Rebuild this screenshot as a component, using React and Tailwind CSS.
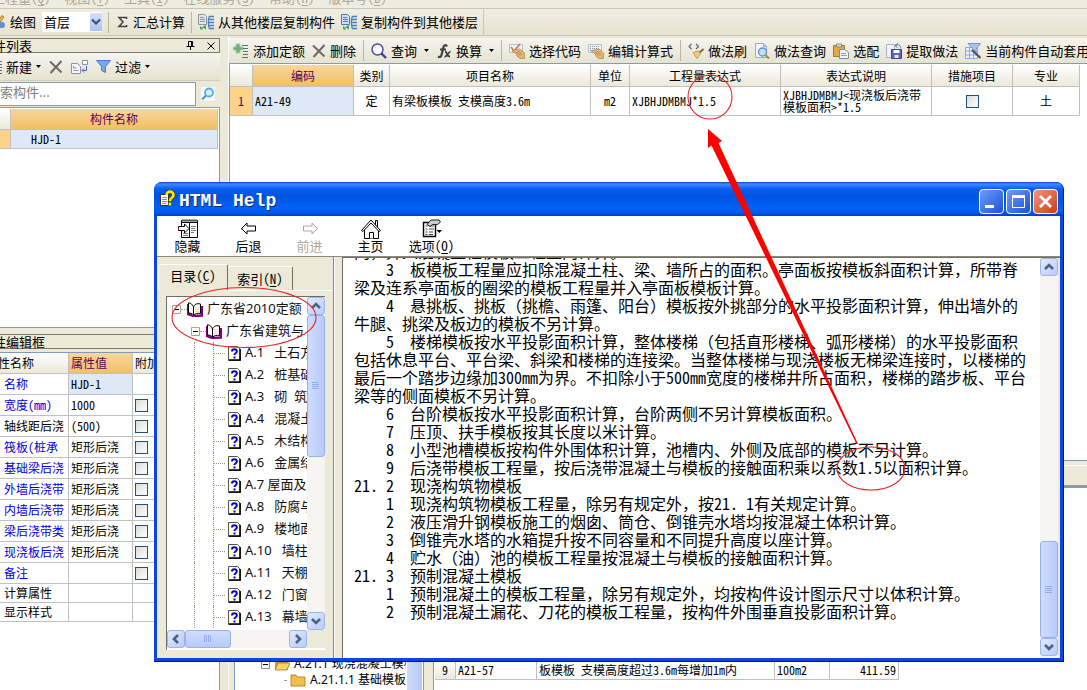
import React from "react";

const HALF = "[font-feature-settings:'hwid']";

// Latin runs are set in half-width glyphs, as in a fixed-pitch Chinese font.
function T({ children }) {
  return String(children)
    .split(/([ -~]+)/)
    .map((s, i) => (i % 2 ? <span key={i} className={HALF}>{s}</span> : s));
}

function Key({ label, k }) {
  return (
    <span className="whitespace-nowrap">
      {label}
      <span className={HALF}>(<u className="underline-offset-2">{k}</u>)</span>
    </span>
  );
}

const Svg = ({ w = 16, h = 16, children }) => (
  <svg width={w} height={h} viewBox={`0 0 ${w} ${h}`} className="shrink-0" aria-hidden="true">{children}</svg>
);

const CrossIcon = () => (
  <Svg w={14} h={14}><path d="M1 1.5 L12.5 12.5 M12.5 1 L1.5 13" stroke="#6b6b6b" strokeWidth="2" fill="none" /></Svg>
);
const Down = () => <Svg w={5} h={3}><path d="M0 0h5L2.5 3z" fill="#000" /></Svg>;
const Lines = ({ x = 9 }) => (
  <path d={`M${x} 2.5h6M${x + 1} 5.5h5M${x + 1} 8.5h5M${x + 1} 11.5h5M${x} 14.5h6`} stroke="#5b6b80" fill="none" />
);
const AddIcon = () => (
  <Svg>
    <path d="M3 1h4v3h3v3H7v3H3V7H0V4h3z" fill="#6fae78" stroke="#a9cfae" />
    <Lines x={9} />
  </Svg>
);
const CopyIcon = ({ tint, edge }) => (
  <Svg>
    <path d="M.500 .500h6l2 2v8h-8z" fill={tint} stroke={edge} />
    <path d="M2 3.500h4M2 5.500h5M2 7.500h5" stroke={edge} />
    <path d="M2 11.500c.500 1.500 1.500 2 2.500 2V16l-2.500-1zM4 13l4-2v4.500z" fill="#37a85a" />
    <path d="M11.500 2c-1.500 3-1.500 9 0 13M11.500 2.500h4.500M11 5.500h5M10.500 8.500H16M11 11.500h5M11.500 14.500h4.500" stroke="#4a80bb" fill="none" strokeWidth="1.300" />
  </Svg>
);
const PageMag = () => (
  <Svg>
    <path d="M1.500 .500h8l3 3v11h-11z" fill="#f2f6fb" stroke="#9badc4" />
    <path d="M9.500 .500v3h3" fill="none" stroke="#9badc4" />
    <circle cx="8.500" cy="9" r="4" fill="#bfe0f8" stroke="#5f8fc0" strokeWidth="1.300" />
    <path d="M11.500 12l3.500 3.500" stroke="#c8862c" strokeWidth="2.200" />
  </Svg>
);
const MagIcon = () => (
  <Svg>
    <circle cx="6.500" cy="6.500" r="5.500" fill="#f7faff" stroke="#4747a3" strokeWidth="1.400" />
    <path d="M10.500 10.500l4.500 4.500" stroke="#3a3a9c" strokeWidth="2.400" />
  </Svg>
);
const FxIcon = () => (
  <Svg>
    <path d="M11 3.500c-1-2-3-1.500-3.500.5L5.500 12c-.5 2-2 2.500-3.500 1.500M4 6.500h6" stroke="#3f3f3f" strokeWidth="2.200" fill="none" />
    <path d="M9 8.500c2.500 0 1.500 5.500 5 5M14.500 9c-2-1-3.500 5.500-6 4.500" stroke="#3f3f3f" strokeWidth="1.800" fill="none" />
  </Svg>
);
const HandIcon = ({ check }) => (
  <Svg>
    <path d="M.500 1.500h13v8H.500z" fill="#eef3fa" stroke="#b3bfce" />
    {check ? (
      <path d="M2 4l3 4L11 1" stroke="#e0705c" strokeWidth="1.600" fill="none" />
    ) : (
      <path d="M2 3.500h10M2 5.500h10M2 7.500h5" stroke="#8093ad" strokeDasharray="1 1" />
    )}
    <path d="M3 8l4-1.500 4-.5 4.500 4v5.500H11l-3-2.500-1-2.500z" fill="#e0b774" stroke="#b38a4c" strokeWidth=".8" />
    <path d="M7 9l4.500 3.500M9 8l4 3.500" stroke="#a97c3a" strokeWidth=".8" />
  </Svg>
);
const BrushIcon = () => (
  <Svg>
    <path d="M3.500 1L1 3.500 3.500 6M8 1l2.500 2.500L8 6" stroke="#55606e" strokeWidth="1.100" fill="none" />
    <path d="M15.500 6L11 10" stroke="#8c6a44" strokeWidth="2" />
    <path d="M5 9.500L10.500 8l2 2.500L9 15.500z" fill="#edcf82" stroke="#b98b3c" strokeWidth=".8" />
  </Svg>
);
const PasteIcon = () => (
  <Svg>
    <path d="M.500 2.500h11v11H.500z" fill="#e2a94a" stroke="#a7762b" />
    <path d="M3.500 1h5v3h-5z" fill="#d6d6d6" stroke="#7d7d7d" strokeWidth=".8" />
    <path d="M6.500 6.500h5l4 3v6h-9z" fill="#f1f5fa" stroke="#7c8ba0" />
    <path d="M8 10.500h5M8 12.500h6" stroke="#8fa0b6" />
  </Svg>
);
const SaveIcon = () => (
  <Svg>
    <path d="M.500 1.500h8v13h-8z" fill="#eef3fa" stroke="#a4b3c8" />
    <path d="M9 2.500c4-1.500 6 0 5.500 3M12 .500l-3 2 2.500 2" stroke="#58759c" fill="none" />
    <path d="M5.500 6.500h10v9h-10z" fill="#5c64bc" stroke="#39419c" />
    <path d="M7.500 7h6v3h-6z" fill="#fff" /><path d="M8.500 12h4v3h-4z" fill="#dfe5f5" />
  </Svg>
);
const GridIcon = () => (
  <Svg>
    <path d="M.500 4.500h12v11H.500zM.500 8h12M.500 12h12M4.500 4v11M8.500 4v11" fill="#eaf1fb" stroke="#8aa9dc" />
    <path d="M3 .500h12.500L11 6v4L8 9V6z" fill="#a9c4ef" stroke="#5f84c5" strokeWidth=".8" />
    <path d="M7 7l8.500 8" stroke="#545454" strokeWidth="2.200" />
  </Svg>
);
const PenIcon = () => (
  <Svg>
    <path d="M0 5h10v9H0z" fill="#8eb6e8" stroke="#4a78b8" />
    <path d="M14 3l-6 8-2 1 .500-2.500L12 1.500z" fill="#f2b945" stroke="#9b6c20" strokeWidth=".8" />
    <circle cx="12" cy="11" r="3" fill="#5f8fd6" />
  </Svg>
);
const FunnelIcon = () => (
  <Svg w={15} h={15}><path d="M.500 1.500h14L9.500 7.500v6l-4-2V7.500z" fill="#7aa6ec" stroke="#4a7bd0" /></Svg>
);
const CardsIcon = () => (
  <Svg w={17} h={14}>
    <path d="M.500 3.500h6l3 3v7h-9z" fill="#f4f7fb" stroke="#8894a8" />
    <path d="M2.500 6v2h3M2.500 10.500h5" stroke="#8894a8" fill="none" />
    <path d="M11.500 .500h5v4h-5z" fill="#fff" stroke="#8894a8" />
    <path d="M15.500 6v4.500h-4M13 8.500l-2 2 2 2" stroke="#3c62d0" fill="none" />
  </Svg>
);

const Sep = () => <span className="h-[21px] w-px shrink-0 bg-[#b9b6a2]" />;

function Tool({ icon, label, arrow }) {
  return (
    <button className="flex shrink-0 items-center gap-1 whitespace-nowrap">
      {icon}
      <span>{label}</span>
      {arrow && <span className="pl-[3px]"><Down /></span>}
    </button>
  );
}

const check =
  "block size-[13px] appearance-none border border-[#1d5281] bg-linear-to-br from-[#dcdcd7] to-white";

const cell = "border-r border-b border-[#c0c0c0] overflow-hidden whitespace-nowrap font-normal";
const headBg = "bg-linear-to-b from-white to-[#ebe9da]";
const goldBg = "bg-linear-to-b from-[#f9d69c] to-[#f1c062] text-[#5a005a]";

const PROPS = [
  ["名称", "HJD-1", false, true],
  ["宽度(mm)", "1000", true, true],
  ["轴线距后浇", " (500)", true, false],
  ["筏板(桩承", "矩形后浇", true, true],
  ["基础梁后浇", "矩形后浇", true, true],
  ["外墙后浇带", "矩形后浇", true, true],
  ["内墙后浇带", "矩形后浇", true, true],
  ["梁后浇带类", "矩形后浇", true, true],
  ["现浇板后浇", "矩形后浇", true, true],
  ["备注", "", true, true],
  ["计算属性", "", false, false],
  ["显示样式", "", false, false],
];

function LeftPane() {
  return (
    <aside className="flex w-[220px] shrink-0 flex-col">
      <div className="mt-0.5 flex h-[15px] items-center border border-l-0 border-[#7b7a73] pr-1 text-[13px] leading-[13px]">
        <h2 className="-ml-[7px] flex-1">件列表</h2>
        <button aria-label="固定" className="mr-3"><Svg w={9} h={9}><path d="M2.500 5V.500h4V5M.500 5.500h8M4.500 6v3M5.500 1v4" stroke="#000" fill="none" /></Svg></button>
        <button aria-label="关闭"><Svg w={8} h={8}><path d="M.500 .500l7 7M7.500 .500l-7 7" stroke="#000" fill="none" /></Svg></button>
      </div>
      <div className="flex h-[27px] items-center gap-2 bg-linear-to-b from-[#f5f4ee] to-[#e6e3d0] text-[13px]">
        <button className="-ml-[14px] flex items-center gap-1">
          <Svg><Lines x={10} /></Svg><span>新建</span><Down />
        </button>
        <button aria-label="删除"><CrossIcon /></button>
        <button aria-label="复制"><CardsIcon /></button>
        <button className="flex items-center gap-1"><FunnelIcon /><span>过滤</span><Down /></button>
      </div>
      <div className="flex h-[26px] items-center border-t border-[#cfccba] text-[13px]">
        <input
          aria-label="搜索构件"
          placeholder="搜索构件..."
          className="-ml-[18px] h-[24px] min-w-0 flex-1 border border-[#7f9db9] bg-white pb-1 pl-1 outline-none placeholder:text-[#7d7d7d]"
        />
        <button aria-label="搜索" className="flex w-[24px] justify-center">
          <Svg w={14} h={14}>
            <path d="M0 0h14v14H0z" fill="#f7fafc" />
            <circle cx="8" cy="5.500" r="4" fill="#d8eefc" stroke="#56aee6" strokeWidth="1.800" />
            <path d="M5 8.500L1 12.500" stroke="#4a9ad6" strokeWidth="2.200" />
          </Svg>
        </button>
      </div>
      <div className="mt-px h-[220px] border-t border-r border-[#7f9db9] bg-white pt-px pr-px">
        <table className="w-full table-fixed border-separate border-spacing-0 text-[12px]">
          <colgroup><col className="w-[11px]" /><col /></colgroup>
          <thead>
            <tr className="h-[21px]"><th className={`${cell} ${headBg}`} /><th className={`${cell} ${goldBg}`}>构件名称</th></tr>
          </thead>
          <tbody>
            <tr className="h-[19px]">
              <td className={`${cell} bg-[#ffd28a]`} />
              <td className={`${cell} bg-[#dfe8f6] pl-5`}><T>HJD-1</T></td>
            </tr>
          </tbody>
        </table>
      </div>
      <div className="flex min-h-0 flex-1 flex-col border-t border-[#7f9db9] pt-[6px]">
        <h2 className="mb-[3px] flex h-[15px] items-center border-y border-[#7b7a73] text-[13px] leading-[13px]">
          <span className="-ml-[7px]">性编辑框</span>
        </h2>
        <div className="flex-1 border-t border-r border-[#7f9db9] bg-white">
          <table className="w-full table-fixed border-separate border-spacing-0 text-[12px] leading-[16px]">
            <colgroup><col className="w-[69px]" /><col className="w-[64px]" /><col /></colgroup>
            <thead>
              <tr className="h-[21px] text-left">
                <th className={`${cell} ${headBg}`}><span className="-ml-[2px]">性名称</span></th>
                <th className={`${cell} ${goldBg} pl-0.5`}>属性值</th>
                <th className={`${cell} ${headBg} pl-0.5`}>附加</th>
              </tr>
            </thead>
            <tbody>
              {PROPS.map(([name, value, box, blue], i) => (
                <tr key={name} className={i < 10 ? "h-[21px]" : "h-[19px]"}>
                  <td className={`${cell} pl-1 ${blue ? "text-[#0000e0]" : ""}`}><T>{name}</T></td>
                  <td className={`${cell} pl-0.5 ${i === 0 ? "bg-[#dfe8f6]" : ""}`}><T>{value}</T></td>
                  <td className={`${cell} pl-0.5`}>{box && <input type="checkbox" aria-label={name} className={check} />}</td>
                </tr>
              ))}
            </tbody>
          </table>
        </div>
      </div>
    </aside>
  );
}

function RightPane() {
  return (
    <main className="flex min-w-0 flex-1 flex-col border-l border-white">
      <div className="mt-0.5 flex h-[26px] shrink-0 items-center gap-[7px] overflow-hidden border-b border-[#7f9db9] bg-linear-to-b from-[#f5f4ee] to-[#e6e3d0] pl-1 text-[13px]">
        <Tool icon={<AddIcon />} label="添加定额" />
        <Tool icon={<CrossIcon />} label="删除" />
        <Sep />
        <Tool icon={<MagIcon />} label="查询" arrow />
        <Tool icon={<FxIcon />} label="换算" arrow />
        <Sep />
        <Tool icon={<HandIcon check />} label="选择代码" />
        <Tool icon={<HandIcon />} label="编辑计算式" />
        <Sep />
        <Tool icon={<BrushIcon />} label="做法刷" />
        <Tool icon={<PageMag />} label="做法查询" />
        <Tool icon={<PasteIcon />} label="选配" />
        <Tool icon={<SaveIcon />} label="提取做法" />
        <Tool icon={<GridIcon />} label="当前构件自动套用" />
      </div>
      <div className="h-[396px] shrink-0 border-l border-[#7f9db9] bg-white pt-px">
        <table className="w-[850px] table-fixed border-separate border-spacing-0 text-[12px]">
          <colgroup>
            <col className="w-[23px]" /><col className="w-[101px]" /><col className="w-[36px]" /><col className="w-[201px]" />
            <col className="w-[39px]" /><col className="w-[151px]" /><col className="w-[151px]" /><col className="w-[81px]" /><col />
          </colgroup>
          <thead>
            <tr className="h-[22px]">
              <th className={`${cell} ${headBg}`} />
              <th className={`${cell} ${goldBg}`}>编码</th>
              {["类别", "项目名称", "单位", "工程量表达式", "表达式说明", "措施项目", "专业"].map((h) => (
                <th key={h} className={`${cell} ${headBg}`}>{h}</th>
              ))}
            </tr>
          </thead>
          <tbody>
            <tr className="h-[29px]">
              <td className={`${cell} bg-[#ffd28a] text-center text-[#5a005a]`}><T>1</T></td>
              <td className={`${cell} bg-[#dfe8f6] pl-0.5`}><T>A21-49</T></td>
              <td className={`${cell} text-center`}>定</td>
              <td className={`${cell} pl-0.5`}><T>有梁板模板 支模高度3.6m</T></td>
              <td className={`${cell} text-center`}><T>m2</T></td>
              <td className={`${cell} pl-0.5`}><T>XJBHJDMBMJ*1.5</T></td>
              <td className={`${cell} pl-0.5 leading-[12px]`}><T>{"XJBHJDMBMJ<现浇板后浇带"}</T><br /><T>{"模板面积>*1.5"}</T></td>
              <td className={cell}><input type="checkbox" aria-label="措施项目" className={`${check} mx-auto`} /></td>
              <td className={`${cell} text-center`}>土</td>
            </tr>
          </tbody>
        </table>
      </div>
      <div className="h-[27px] shrink-0 border-t border-b border-[#7f9db9] pt-1"><div className="h-full border-t border-b border-t-white border-b-[#9d9a8a]" /></div>
      <div className="flex min-h-0 flex-1">
        <div className="ml-[5px] flex w-[190px] shrink-0 border border-b-0 border-[#7f9db9] bg-white text-[12px]">
          <ul className="flex min-w-0 flex-1 flex-col justify-end overflow-hidden whitespace-nowrap pb-0.5 font-['Noto_Sans','Noto_Sans_CJK_SC',sans-serif] leading-[16px]">
            <li className="flex items-center gap-1 pl-[26px]">
              <Svg w={9} h={9}><path d="M.500 .500h8v8h-8z" fill="#fff" stroke="#7b93b5" /><path d="M2 4.500h5" stroke="#000" /></Svg>
              <Svg w={16} h={14}><path d="M1 3h5l1 2h7v8H1z" fill="#d99a2b" /><path d="M4 6h12l-3 7H1z" fill="#fbd367" stroke="#a8741c" strokeWidth=".8" /></Svg>
              <span>A.21.1 现浇混凝土模板</span>
            </li>
            <li className="flex items-center gap-1 pl-[49px]">
              <span className="w-2 border-t border-dotted border-[#a09c8a]" />
              <Svg w={16} h={14}><path d="M1 2h5l1 2h8v9H1z" fill="#f3bf4b" stroke="#a8741c" strokeWidth=".8" /></Svg>
              <span>A.21.1.1 基础模板</span>
            </li>
          </ul>
          <div className="w-[17px] border-x border-white bg-linear-to-r from-[#cfdcfd] to-[#b3c8f8]" />
        </div>
        <div className="ml-[9px] flex flex-1 flex-col justify-end border-t border-l border-[#7f9db9] bg-white pb-[10px] pl-px">
          <table className="w-[464px] table-fixed border-separate border-spacing-0 text-[12px]">
            <colgroup><col className="w-[21px]" /><col className="w-[81px]" /><col className="w-[238px]" /><col className="w-[55px]" /><col /></colgroup>
            <tbody>
              <tr className="h-[19px]">
                <td className={`${cell} ${headBg} text-center`}><T>9</T></td>
                <td className={`${cell} pl-0.5`}><T>A21-57</T></td>
                <td className={`${cell} pl-0.5`}><T>板模板 支模高度超过3.6m每增加1m内</T></td>
                <td className={`${cell} pl-0.5`}><T>100m2</T></td>
                <td className={`${cell} pr-0.5 text-right`}><T>411.59</T></td>
              </tr>
            </tbody>
          </table>
        </div>
      </div>
    </main>
  );
}

const NAV = ["A.1   土石方", "A.2   桩基础", "A.3   砌  筑", "A.4   混凝土", "A.5   木结构", "A.6   金属结", "A.7 屋面及", "A.8   防腐与", "A.9   楼地面", "A.10   墙柱面", "A.11   天棚工", "A.12   门窗工", "A.13   幕墙工"];

const BODY = [
  ["", "", "内，并入混凝土柱模板工程量内计算。"],
  ["", "3", "板模板工程量应扣除混凝土柱、梁、墙所占的面积。亭面板按模板斜面积计算，所带脊"],
  [null, null, "梁及连系亭面板的圈梁的模板工程量并入亭面板模板计算。"],
  ["", "4", "悬挑板、挑板（挑檐、雨篷、阳台）模板按外挑部分的水平投影面积计算，伸出墙外的"],
  [null, null, "牛腿、挑梁及板边的模板不另计算。"],
  ["", "5", "楼梯模板按水平投影面积计算，整体楼梯（包括直形楼梯、弧形楼梯）的水平投影面积"],
  [null, null, "包括休息平台、平台梁、斜梁和楼梯的连接梁。当整体楼梯与现浇楼板无梯梁连接时，以楼梯的"],
  [null, null, "最后一个踏步边缘加300mm为界。不扣除小于500mm宽度的楼梯井所占面积，楼梯的踏步板、平台"],
  [null, null, "梁等的侧面模板不另计算。"],
  ["", "6", "台阶模板按水平投影面积计算，台阶两侧不另计算模板面积。"],
  ["", "7", "压顶、扶手模板按其长度以米计算。"],
  ["", "8", "小型池槽模板按构件外围体积计算，池槽内、外侧及底部的模板不另计算。"],
  ["", "9", "后浇带模板工程量，按后浇带混凝土与模板的接触面积乘以系数1.5以面积计算。"],
  ["21.", "2", "现浇构筑物模板"],
  ["", "1", "现浇构筑物模板工程量，除另有规定外，按21. 1有关规定计算。"],
  ["", "2", "液压滑升钢模板施工的烟囱、筒仓、倒锥壳水塔均按混凝土体积计算。"],
  ["", "3", "倒锥壳水塔的水箱提升按不同容量和不同提升高度以座计算。"],
  ["", "4", "贮水（油）池的模板工程量按混凝土与模板的接触面积计算。"],
  ["21.", "3", "预制混凝土模板"],
  ["", "1", "预制混凝土的模板工程量，除另有规定外，均按构件设计图示尺寸以体积计算。"],
  ["", "2", "预制混凝土漏花、刀花的模板工程量，按构件外围垂直投影面积计算。"],
];

const CHEV = { up: "M4 10l4-4 4 4", down: "M4 6l4 4 4-4", left: "M10 4L6 8l4 4", right: "M6 4l4 4-4 4" };
function ScrollBtn({ dir }) {
  return (
    <button aria-label={dir} className="flex size-[18px] shrink-0 items-center justify-center rounded-[3px] border border-[#9db5ea] bg-linear-to-br from-[#e1eafe] to-[#b9cbf8]">
      <Svg><path d={CHEV[dir]} stroke="#4d6185" strokeWidth="2.600" fill="none" /></Svg>
    </button>
  );
}
const thumb = "flex shrink-0 items-center justify-center rounded-[3px] border border-[#98b1e4] from-[#cfdcfe] to-[#b7cbf9]";

const Book = () => (
  <Svg w={16} h={15}>
    <path d="M1 2v10l5.500 2 8.500-.5V4" fill="none" stroke="#800080" strokeWidth="2.400" />
    <path d="M1.500 .800c2.500.2 4 1.700 5 4.200v8C5 11.500 3.500 11 1.500 11z" fill="#fff" stroke="#000" />
    <path d="M6.500 13V5c1-2.500 3-4 7-3v9.500c-3-.5-5 0-7 1.500z" fill="#ffffe4" stroke="#000" />
    <path d="M8.500 5.500h4M8.500 7.500h4M8.500 9.500h4" stroke="#e0d000" strokeDasharray="1 1" />
  </Svg>
);
const Topic = () => (
  <Svg w={13} h={15}>
    <path d="M.500 .500h9l3 3v11H.500z" fill="#ffffe4" stroke="#55554f" />
    <path d="M12 3v11H1" stroke="#000" strokeWidth="1.600" fill="none" />
    <path d="M4 5.500c0-3 4.800-3 4.800 0 0 1.700-2.300 1.700-2.300 3.500M6.500 10.500v2" stroke="#0000e8" strokeWidth="2" fill="none" />
  </Svg>
);
const Minus = () => <Svg w={9} h={9}><path d="M.500 .500h8v8h-8z" fill="#fff" stroke="#a8a490" /><path d="M2 4.500h5" stroke="#000" /></Svg>;
const Dash = () => <span className="w-[6px] shrink-0 border-t border-dotted border-[#a09c8a]" />;

const ARROW = "M.500 6.500L6 1v3h8.500v5H6v3z";
const HELP_TOOLS = [
  ["隐藏", <Svg w={20} h={20}>
    <path d="M3.500 1.500h16v17h-16zM3.500 3.500h16M11.500 4v14" fill="#fff" stroke="#000" />
    <path d="M4 1.500h15" stroke="#555" strokeWidth="2" /><path d="M13 7.500h5M13 9.500h4M13 11.500h5M13 13.500h3M5 14.500h5M5 16.500h5" stroke="#777" />
    <path d="M11 9.500L6.500 5v2.500H.500v4h6V14z" fill="#fff" stroke="#000" /><path d="M0 9h1v2H0z" fill="#d00" />
  </Svg>],
  ["后退", <Svg w={16} h={14}><path d={ARROW} fill="#fff" stroke="#000" /><path d="M0 6h1.500v1.500H0z" fill="#d00" /></Svg>],
  ["前进", <Svg w={16} h={14}><path d="M15.500 6.500L10 1v3H1.500v5H10v3z" fill="#fff" stroke="#aca899" /></Svg>],
  ["主页", <Svg w={20} h={20}>
    <path d="M3.500 10v9.500h14V10" fill="#fff" stroke="#000" /><path d="M14.500 6V1.500h2V9" fill="#fff" stroke="#000" />
    <path d="M.500 11.500L10 1l9.500 10.500-1.500 1L10 4l-8 8.500z" fill="#fff" stroke="#000" />
    <path d="M8.500 19.500v-6h4v6" fill="#fff" stroke="#000" />
  </Svg>],
  ["选项", <Svg w={20} h={20}>
    <path d="M1.500 3.500h12v14h-12z" fill="#fff" stroke="#000" strokeWidth="1.400" />
    <path d="M3.500 7h2M7 7h5M3.500 10h2M7 10h5M3.500 13h2M7 13h4M3.500 15.500h2M7 15.500h4" stroke="#444" />
    <path d="M5 5.500L9 1h8l1.500 2-3 2.500h-5L8 7.500z" fill="#ccc" stroke="#222" /><path d="M14.500 11h5.500l-2.700 3z" fill="#000" />
  </Svg>],
];

const winBtn = "flex size-[25px] items-center justify-center rounded-[4px] border border-white bg-linear-to-br";

function HelpWindow() {
  return (
    <section
      aria-label="HTML Help"
      className="absolute top-[182px] right-[23px] bottom-[28px] left-[154px] flex flex-col overflow-hidden rounded-t-[8px] border-r border-b border-[#00138c] bg-[#0a46e4] px-[3px] pb-[3px]"
    >
      <header className="-mx-[3px] flex h-[34px] shrink-0 items-center gap-[2px] bg-[linear-gradient(to_bottom,#0b3fc0_0,#3c8cff_2px,#0a5cf0_7px,#0054e0_14px,#0060f8_26px,#0058ee_31px,#003ac4_34px)] pr-[5px] pl-[6px]">
        <Svg w={16} h={18}>
          <path d="M.500 4.500h8v11h-8z" fill="#fff" stroke="#333" /><path d="M2 7.500h5M2 9.500h5M2 11.500h5M2 13.500h4" stroke="#888" />
          <path d="M6.500 5c0-4.500 7-4.500 7 0 0 3-3.500 2.500-3.500 6M10 12.500v3" stroke="#3a3a00" strokeWidth="4" fill="none" />
          <path d="M6.500 5c0-4.500 7-4.500 7 0 0 3-3.500 2.500-3.500 6M10 12.500v3" stroke="#ffe900" strokeWidth="2.600" fill="none" />
        </Svg>
        <h1 className="flex-1 pt-1 pl-px font-['Liberation_Mono',monospace] text-[18px] font-bold text-white [text-shadow:1px_1px_#0a2a80]">HTML Help</h1>
        <div className="flex gap-0.5 pt-1">
          <button aria-label="最小化" className={`${winBtn} from-[#6f9bf8] to-[#1c4fd8]`}><Svg w={17} h={17}><path d="M2 12h9v3H2z" fill="#fff" /></Svg></button>
          <button aria-label="最大化" className={`${winBtn} from-[#6f9bf8] to-[#1c4fd8]`}><Svg w={17} h={17}><path d="M2.500 3v11.500h12V3" fill="none" stroke="#fff" /><path d="M2 2h13v3H2z" fill="#fff" /></Svg></button>
          <button aria-label="关闭" className={`${winBtn} from-[#f0937a] to-[#cc3a16]`}><Svg w={17} h={17}><path d="M3 3l11 11M14 3L3 14" stroke="#fff" strokeWidth="2.800" /></Svg></button>
        </div>
      </header>
      <nav className="flex h-[40px] shrink-0 bg-white text-[13px]">
        {HELP_TOOLS.map(([label, icon], i) => (
          <button key={label} disabled={i === 2} className="flex w-[61px] flex-col items-center pt-[3px] disabled:text-[#aca899]">
            <span className="flex h-[19px] items-center">{icon}</span>
            <span className="leading-[16px]">{i === 4 ? <Key label={label} k="O" /> : label}</span>
          </button>
        ))}
      </nav>
      <div className="flex min-h-0 flex-1 border-t border-[#8c8979] bg-[#ece9d8]">
        <div className="flex w-[177px] shrink-0 flex-col border-r border-[#8c8979] pt-[7px] pb-1 pl-px text-[13px]">
          <div role="tablist" className="flex h-[26px] items-end">
            <button role="tab" aria-selected="true" className="h-[26px] w-[70px] rounded-t-[2px] border border-b-0 border-white border-r-[#716f64] pb-1"><Key label="目录" k="C" /></button>
            <button role="tab" aria-selected="false" className="h-[24px] w-[65px] rounded-t-[2px] border-t border-r border-t-white border-r-[#716f64]"><Key label="索引" k="N" /></button>
            <span className="flex-1" />
          </div>
          <div className="ml-[70px] h-px bg-white" />
          <div className="mt-[5px] mr-[8px] ml-[8px] flex min-h-0 flex-1 flex-col border-t border-l border-[#716f64] bg-[#ece9d8]">
            <div className="flex min-h-0 flex-1">
              <ul className="min-w-0 flex-1 overflow-hidden bg-white pt-px font-['Noto_Sans','Noto_Sans_CJK_SC',sans-serif] whitespace-pre text-[#111]">
                <li className="flex h-[22px] items-center pl-[5px]"><Minus /><Dash /><Book /><a href="#top" className="pl-1">广东省2010定额</a></li>
                <li className="flex h-[22px] items-center pl-6"><Minus /><Dash /><Book /><a href="#part" className="pl-1">广东省建筑与</a></li>
                {NAV.map((n) => (
                  <li key={n} className="flex h-[22px] items-center pl-[27px]">
                    <span className="h-full w-[19px] shrink-0 border-l border-dotted border-[#a09c8a]" />
                    <span className="flex h-full w-[15px] shrink-0 items-center border-l border-dotted border-[#a09c8a]"><span className="w-[11px] border-t border-dotted border-[#a09c8a]" /></span>
                    <Topic /><a href="#topic" className="pl-1">{n}</a>
                  </li>
                ))}
              </ul>
              <div className="flex w-[18px] shrink-0 flex-col bg-[#f6f5f1]">
                <ScrollBtn dir="up" />
                <div className={`${thumb} h-[142px] bg-linear-to-r`}><Svg w={8} h={8}><path d="M0 .500h7M0 2.500h7M0 4.500h7M0 6.500h7" stroke="#8fabee" /></Svg></div>
                <span className="flex-1" />
                <ScrollBtn dir="down" />
              </div>
            </div>
            <div className="mr-[18px] flex h-[18px] bg-[#f6f5f1]">
              <ScrollBtn dir="left" />
              <div className={`${thumb} w-[46px] bg-linear-to-b`}><Svg w={8} h={8}><path d="M.500 0v7M2.500 0v7M4.500 0v7M6.500 0v7" stroke="#8fabee" /></Svg></div>
              <span className="flex-1" />
              <ScrollBtn dir="right" />
            </div>
            <div className="h-[2px] bg-white" />
          </div>
          <div className="h-[4px]" />
        </div>
        <div className="w-[8px] shrink-0 border-l border-white" />
        <div className="flex min-w-0 flex-1 border-t border-l border-[#716f64] bg-white">
          <article className="min-w-0 flex-1 overflow-hidden pl-[11px]">
            <div className="-mt-4 text-[16px] leading-[18px] whitespace-nowrap">
              {BODY.map(([sec, no, text], i) => (
                <p key={i} className="h-[18px]">
                  {no && <span className={`${HALF} inline-block w-8`}>{sec}</span>}
                  {no && <span className={`${HALF} inline-block w-6`}>{no}</span>}
                  <T>{text}</T>
                </p>
              ))}
            </div>
          </article>
          <div className="flex w-[18px] shrink-0 flex-col bg-[#f6f5f1]">
            <ScrollBtn dir="up" />
            <span className="flex-1" />
            <div className={`${thumb} h-[97px] bg-linear-to-r`}><Svg w={8} h={8}><path d="M0 .500h7M0 2.500h7M0 4.500h7M0 6.500h7" stroke="#8fabee" /></Svg></div>
            <ScrollBtn dir="down" />
            <span className="h-0.5" />
          </div>
          <div className="w-[2px] bg-[#ece9d8]" />
        </div>
      </div>
    </section>
  );
}

export default function App() {
  return (
    <div className="relative flex h-screen flex-col overflow-hidden bg-[#ece9d8] font-['Noto_Sans_CJK_SC',sans-serif] text-black">
      <nav className="flex h-2 shrink-0 items-end gap-[14px] overflow-hidden bg-[#efeddf] pb-[2px] text-[13px] leading-[16px] text-[#aca899]">
        <span className="-ml-[8px]"><Key label="工程量" k="Q" /></span>
        <Key label="视图" k="T" /><Key label="工具" k="I" /><Key label="在线服务" k="S" /><Key label="帮助" k="H" /><Key label="版本号" k="B" />
      </nav>
      <div className="flex h-[28px] shrink-0 border-t border-b border-[#c9c6b3] bg-linear-to-b from-[#f0eee2] to-[#e6e3d0] text-[13px]">
        <div className="flex items-center gap-[6px] border-r border-[#c9c6b3] pr-[5px]">
          <div className="-ml-[10px]"><Tool icon={<PenIcon />} label="绘图" /></div>
          <label className="relative flex">
            <select aria-label="楼层" className="h-[20px] w-[60px] appearance-none bg-white pb-0.5 pl-0.5 outline-none"><option>首层</option></select>
            <span className="pointer-events-none absolute top-px right-0 flex h-[18px] w-[12px] items-center justify-center bg-linear-to-b from-[#d3e0fd] to-[#a9c2f5]">
              <Svg w={10} h={8}><path d="M1 1.500l4 4 4-4" stroke="#3c4f78" strokeWidth="2.200" fill="none" /></Svg>
            </span>
          </label>
          <Sep />
          <Tool icon={<Svg w={14}><path d="M11.500 5V3.500H4L8 8l-4 4.500h7.500V11" stroke="#444" strokeWidth="1.600" fill="none" /></Svg>} label="汇总计算" />
          <Sep />
          <Tool icon={<CopyIcon tint="#e4e6ea" edge="#8a93a3" />} label="从其他楼层复制构件" />
          <Tool icon={<CopyIcon tint="#cfe0fa" edge="#4a78c8" />} label="复制构件到其他楼层" />
        </div>
      </div>
      <div className="flex min-h-0 flex-1">
        <LeftPane />
        <div className="w-2 shrink-0" />
        <RightPane />
      </div>
      <HelpWindow />
      <svg width="1087" height="690" className="pointer-events-none absolute top-0 left-0" aria-hidden="true">
        <g fill="none" stroke="#ee2222" strokeWidth="1.100">
          <circle cx="710" cy="97" r="22" />
          <ellipse cx="871" cy="468.500" rx="34" ry="21.500" />
          <ellipse cx="244" cy="317.500" rx="72" ry="30" />
        </g>
        <path d="M708 129l14 12-3.500 2L858 444h-1.500L711.500 145.500 708 148z" fill="#fe0000" />
      </svg>
    </div>
  );
}
